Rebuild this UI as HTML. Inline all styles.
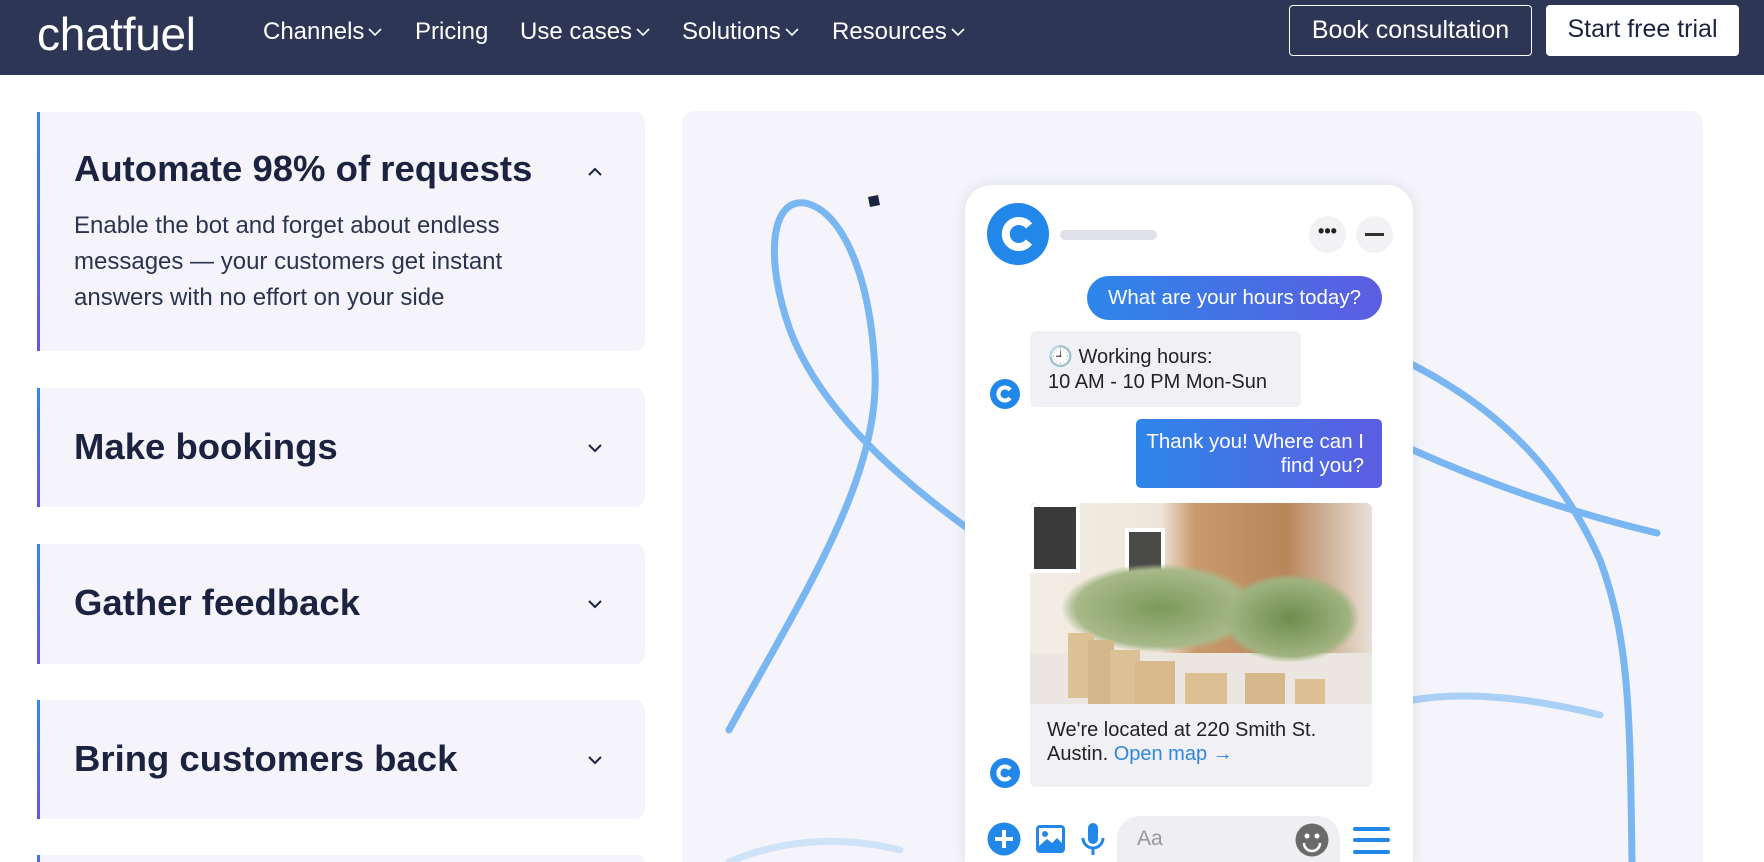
<!DOCTYPE html>
<html style="overflow:hidden;height:862px"><head><meta charset="utf-8"><style>
*{margin:0;padding:0;box-sizing:border-box}
body{width:1764px;height:862px;overflow:hidden;background:#fff;font-family:"Liberation Sans",sans-serif}
#root{position:relative;width:1764px;height:862px;overflow:hidden}
.nav{position:absolute;left:0;top:0;width:1764px;height:75px;background:#2e3655;color:#fff}
.logo{position:absolute;left:37px;top:7px;font-size:46px;letter-spacing:-0.3px;font-weight:normal}
.ni{position:absolute;top:18px;font-size:24px}
.ni svg{margin-left:4px;vertical-align:middle}
.btn{position:absolute;top:5px;height:51px;border-radius:4px;font-size:25px;line-height:49px;text-align:center;white-space:nowrap}
.card{position:absolute;left:37px;width:608px;background:#f4f4fa;border-radius:0 10px 10px 0;border-left:3px solid;border-image:linear-gradient(#2f86f0,#6c52e0) 1}
.card h3{position:absolute;left:34px;font-size:36.5px;font-weight:bold;color:#1b2340;white-space:nowrap}
.card p{position:absolute;left:34px;top:96px;font-size:24px;line-height:36px;color:#2b3350;width:475px}
.chev{position:absolute;right:42px}
.panel{position:absolute;left:682px;top:111px;width:1021px;height:751px;background:#f4f4fa;border-radius:12px 12px 0 0;overflow:hidden}
.phone{position:absolute;left:965px;top:185px;width:448px;height:677px;background:#fff;border-radius:26px 26px 0 0;box-shadow:0 0 14px rgba(120,120,160,.18)}
.b{position:absolute;color:#fff;font-size:20.5px;background:linear-gradient(90deg,#2d86ea,#5c5de0)}
.g{position:absolute;background:#f1f1f5;color:#222;font-size:20px}
</style></head><body><div id="root">
<div class="nav">
<div class="logo">chatfuel</div>
<div class="ni" style="left:263px">Channels<svg width="14" height="9" viewBox="0 0 14 9"><path d="M1 1l6 6 6-6" stroke="#fff" stroke-width="1.6" fill="none"/></svg></div>
<div class="ni" style="left:415px">Pricing</div>
<div class="ni" style="left:520px">Use cases<svg width="14" height="9" viewBox="0 0 14 9"><path d="M1 1l6 6 6-6" stroke="#fff" stroke-width="1.6" fill="none"/></svg></div>
<div class="ni" style="left:682px">Solutions<svg width="14" height="9" viewBox="0 0 14 9"><path d="M1 1l6 6 6-6" stroke="#fff" stroke-width="1.6" fill="none"/></svg></div>
<div class="ni" style="left:832px">Resources<svg width="14" height="9" viewBox="0 0 14 9"><path d="M1 1l6 6 6-6" stroke="#fff" stroke-width="1.6" fill="none"/></svg></div>
<div class="btn" style="left:1289px;width:243px;border:1.5px solid #fff;color:#fff">Book consultation</div>
<div class="btn" style="left:1546px;width:193px;background:#fff;color:#1b2340">Start free trial</div>
</div>

<div class="card" style="top:112px;height:239px">
<h3 style="top:36px">Automate 98% of requests</h3>
<svg class="chev" style="top:55px" width="16" height="10" viewBox="0 0 16 10"><path d="M2 8l6-6 6 6" stroke="#1b2340" stroke-width="2" fill="none"/></svg>
<p>Enable the bot and forget about endless messages — your customers get instant answers with no effort on your side</p>
</div>
<div class="card" style="top:388px;height:119px"><h3 style="top:38px">Make bookings</h3><svg class="chev" style="top:55px" width="16" height="10" viewBox="0 0 16 10"><path d="M2 2l6 6 6-6" stroke="#1b2340" stroke-width="2" fill="none"/></svg></div>
<div class="card" style="top:544px;height:120px"><h3 style="top:38px">Gather feedback</h3><svg class="chev" style="top:55px" width="16" height="10" viewBox="0 0 16 10"><path d="M2 2l6 6 6-6" stroke="#1b2340" stroke-width="2" fill="none"/></svg></div>
<div class="card" style="top:700px;height:119px"><h3 style="top:38px">Bring customers back</h3><svg class="chev" style="top:55px" width="16" height="10" viewBox="0 0 16 10"><path d="M2 2l6 6 6-6" stroke="#1b2340" stroke-width="2" fill="none"/></svg></div>
<div class="card" style="top:855px;height:7px;border-radius:0 10px 0 0"></div>

<div class="panel"></div>
<svg style="position:absolute;left:0;top:0" width="1764" height="862">
<g fill="none" stroke="#7ab6f2" stroke-width="7" stroke-linecap="round">
<path d="M729 730 C800 600 880 480 875 370 C870 270 840 210 805 203 C770 198 765 260 790 330 C820 410 900 480 970 530"/>
<path d="M1413 365 C1500 410 1560 470 1600 560 C1630 640 1630 720 1632 862"/>
<path d="M1413 450 C1480 480 1560 510 1657 533"/>
<path d="M1413 700 C1470 690 1540 700 1600 715" stroke="#a9d0f6"/>
<path d="M729 862 C780 840 840 835 900 850" stroke="#cfe3f8"/>
</g>
<path d="M868 197l10 -2 2 10 -10 2z" fill="#1b2340"/>
</svg>

<div class="phone"></div>
<svg style="position:absolute;left:987px;top:203px" width="62" height="62" viewBox="0 0 62 62"><circle cx="31" cy="31" r="31" fill="#2188ea"/><path d="M42 23 A13 13 0 1 0 42 39" stroke="#fff" stroke-width="8" fill="none"/></svg>
<div style="position:absolute;left:1060px;top:230px;width:97px;height:10px;border-radius:5px;background:#e0e0e8"></div>
<div style="position:absolute;left:1309px;top:216px;width:37px;height:37px;border-radius:50%;background:#f2f2f4;text-align:center;font-size:18px;line-height:30px;font-weight:bold;color:#222">•••</div>
<div style="position:absolute;left:1356px;top:216px;width:37px;height:37px;border-radius:50%;background:#f2f2f4"><div style="position:absolute;left:9px;top:17px;width:19px;height:2.5px;background:#333"></div></div>

<div class="b" style="left:1087px;top:276px;width:295px;height:44px;border-radius:22px;line-height:44px;text-align:center;white-space:nowrap">What are your hours today?</div>
<div class="g" style="left:1030px;top:331px;width:271px;height:76px;border-radius:6px;padding:14px 18px;line-height:25px;white-space:nowrap">🕘 Working hours:<br>10 AM - 10 PM Mon-Sun</div>
<svg style="position:absolute;left:990px;top:379px" width="30" height="30" viewBox="0 0 30 30"><circle cx="15" cy="15" r="15" fill="#2188ea"/><path d="M20 11 A6.5 6.5 0 1 0 20 19" stroke="#fff" stroke-width="4" fill="none"/></svg>
<div class="b" style="left:1136px;top:419px;width:246px;height:69px;border-radius:5px;text-align:right;padding:11px 18px 0 8px;line-height:24px"><span style="white-space:nowrap">Thank you! Where can I</span><br>find you?</div>

<div style="position:absolute;left:1030px;top:503px;width:342px;height:201px;border-radius:6px 6px 0 0;overflow:hidden;background:linear-gradient(90deg,#f3ede4 0%,#efe6da 38%,#c99a6e 48%,#b9865c 75%,#e8e0d8 100%)">
<div style="position:absolute;left:0;top:0;width:50px;height:70px;background:#3a3a3a;border:4px solid #fff"></div>
<div style="position:absolute;left:95px;top:25px;width:40px;height:110px;background:#4a4a48;border:4px solid #fff"></div>
<div style="position:absolute;left:0;top:150px;width:342px;height:51px;background:#ebe6e0"></div>
<div style="position:absolute;left:30px;top:60px;width:200px;height:90px;border-radius:50%;background:radial-gradient(#7d9a5a,#a7b98a 60%,transparent 70%)"></div>
<div style="position:absolute;left:190px;top:70px;width:140px;height:90px;border-radius:50%;background:radial-gradient(#6f8d4e,#9fb37f 60%,transparent 70%)"></div>
<div style="position:absolute;left:38px;top:130px;width:26px;height:65px;background:#dcc196"></div>
<div style="position:absolute;left:58px;top:137px;width:26px;height:64px;background:#d3b68a"></div>
<div style="position:absolute;left:80px;top:147px;width:30px;height:54px;background:#dcc196"></div>
<div style="position:absolute;left:105px;top:158px;width:40px;height:43px;background:#d8b98c"></div>
<div style="position:absolute;left:155px;top:170px;width:42px;height:31px;background:#dcbf93"></div>
<div style="position:absolute;left:215px;top:170px;width:40px;height:31px;background:#d7b88c"></div>
<div style="position:absolute;left:265px;top:176px;width:30px;height:25px;background:#dcbf93"></div>
</div>
<div class="g" style="left:1030px;top:704px;width:342px;height:83px;border-radius:0 0 6px 6px;padding:14px 17px;line-height:24px">We're located at 220 Smith St. Austin. <span style="color:#2f86df">Open map →</span></div>
<svg style="position:absolute;left:990px;top:758px" width="30" height="30" viewBox="0 0 30 30"><circle cx="15" cy="15" r="15" fill="#2188ea"/><path d="M20 11 A6.5 6.5 0 1 0 20 19" stroke="#fff" stroke-width="4" fill="none"/></svg>

<svg style="position:absolute;left:987px;top:822px" width="34" height="34" viewBox="0 0 34 34"><circle cx="17" cy="17" r="16.5" fill="#2188ea"/><path d="M17 8v18M8 17h18" stroke="#fff" stroke-width="4"/></svg>
<svg style="position:absolute;left:1035px;top:824px" width="31" height="30" viewBox="0 0 31 30"><rect x="1" y="1" width="29" height="28" rx="4" fill="#2188ea"/><rect x="4" y="4" width="23" height="18" fill="#fff"/><circle cx="10" cy="10" r="3" fill="#2188ea"/><path d="M4 22l8-7 5 4 5-5 5 5v3z" fill="#2188ea"/></svg>
<svg style="position:absolute;left:1080px;top:822px" width="26" height="36" viewBox="0 0 26 36"><rect x="8" y="1" width="10" height="21" rx="5" fill="#2188ea"/><path d="M3 16a10 10 0 0 0 20 0M13 27v6" stroke="#2188ea" stroke-width="3" fill="none"/></svg>
<div style="position:absolute;left:1117px;top:816px;width:223px;height:46px;border-radius:23px 23px 0 0;background:#efeff3;color:#999;font-size:21px;line-height:46px;padding-left:20px">Aa</div>
<svg style="position:absolute;left:1295px;top:823px" width="34" height="34" viewBox="0 0 34 34"><circle cx="17" cy="17" r="16.5" fill="#6a6a6a"/><circle cx="12" cy="13" r="2.5" fill="#fff"/><circle cx="22" cy="13" r="2.5" fill="#fff"/><path d="M9 20a8 8 0 0 0 16 0" stroke="#fff" stroke-width="2.6" fill="none"/></svg>
<svg style="position:absolute;left:1353px;top:826px" width="37" height="30" viewBox="0 0 37 30"><path d="M2 3h33M2 14h33M2 26h33" stroke="#2188ea" stroke-width="4" stroke-linecap="round"/></svg>
</div></body></html>
